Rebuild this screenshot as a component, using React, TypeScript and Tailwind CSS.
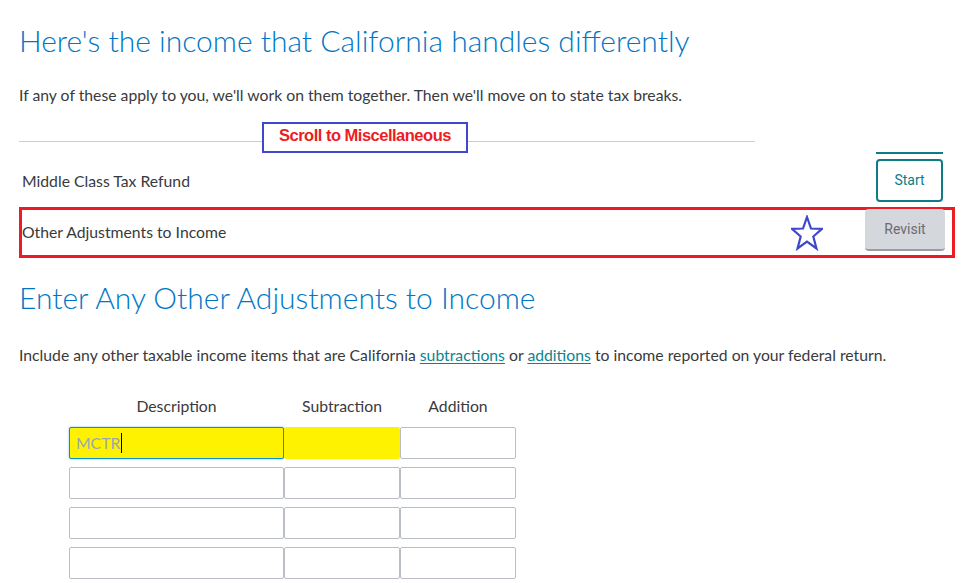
export default function App() {
  const rows = [0, 1, 2, 3]
  return (
    <div className="min-h-screen bg-white text-[#393a3d] font-['Lato','Noto_Sans',sans-serif]">
      <div className="pl-[19px] pt-[22px]">
        <h1 className="text-[30px] leading-[36px] font-light text-[#0077c5]">
          Here's the income that California handles differently
        </h1>
        <p className="mt-[26px] text-[15.75px] leading-[22px]">
          If any of these apply to you, we'll work on them together. Then we'll move on to state tax breaks.
        </p>

        {/* list of income items */}
        <div className="relative mt-[35px] w-[936px]">
          <div className="h-px w-[736px] bg-[#cccccc]" />

          {/* annotation */}
          <div className="absolute left-[243px] top-[-19px] flex h-[31px] w-[206px] items-center border-2 border-[#3f48cc] bg-white pb-[5px] pl-[15px]">
            <span className="font-['Liberation_Sans',sans-serif] text-[16.5px] font-bold tracking-[-0.5px] text-[#ed1c24]">
              Scroll to Miscellaneous
            </span>
          </div>

          <div className="mt-[10px] flex justify-end pr-[12px]">
            <div className="h-[2px] w-[67px] bg-[#0e7c86]" />
          </div>
          <div className="mt-[5px] flex h-[43px] items-center justify-between pl-[3px] pr-[12px]">
            <span className="text-[15.75px]">Middle Class Tax Refund</span>
            <button className="h-[43px] w-[67px] rounded-[4px] border-2 border-[#0e7c86] text-[14px] text-[#0e7c86] font-['Roboto',sans-serif]">
              Start
            </button>
          </div>

          <div className="mt-[5px] flex h-[51px] items-center border-[3px] border-[#ed1c24]">
            <span className="-mt-[2px] text-[15.75px]">Other Adjustments to Income</span>
            <svg className="ml-auto mr-[42px]" width="32" height="36" viewBox="0 0 32 36">
              <polygon
                points="16,2 20,13.5 31,13.8 22.3,21.5 25.5,33.5 16,26.5 6.5,33.5 9.7,21.5 1,13.8 12,13.5"
                fill="none"
                stroke="#3f48cc"
                strokeWidth="2.2"
                strokeLinejoin="miter"
              />
            </svg>
            <button className="mr-[7px] -mt-[1px] h-[42px] w-[80px] self-start rounded-[4px] border-b-2 border-[#9a9ca2] bg-[#d4d7dc] text-[14px] text-[#6b6c72] font-['Roboto',sans-serif]">
              Revisit
            </button>
          </div>
        </div>

        <h2 className="mt-[21px] text-[30px] leading-[36px] font-light text-[#0077c5]">
          Enter Any Other Adjustments to Income
        </h2>
        <p className="mt-[29px] text-[15.75px] leading-[22px]">
          Include any other taxable income items that are California{' '}
          <a className="text-[#0d8390] underline underline-offset-2">subtractions</a> or{' '}
          <a className="text-[#0d8390] underline underline-offset-2">additions</a> to income reported on your federal return.
        </p>

        {/* adjustments table */}
        <div className="ml-[50px] mt-[30px]">
          <div className="flex text-[15.75px] leading-[20px]">
            <div className="w-[215px] text-center">Description</div>
            <div className="w-[116px] text-center">Subtraction</div>
            <div className="w-[116px] text-center">Addition</div>
          </div>
          <div className="mt-[11px] flex flex-col gap-[8px]">
            {rows.map((r) =>
              r === 0 ? (
                <div key={r} className="flex h-[32px]">
                  <div className="flex w-[215px] items-center rounded-[2px] border border-[#0a8fd6] bg-[#fff200] pl-[6px] text-[15.75px] text-[#9aa6b8] shadow-[0_0_2px_#4fb3ee]">
                    MCTR
                    <span className="ml-px h-[20px] w-px bg-black" />
                  </div>
                  <div className="w-[116px] rounded-[2px] bg-[#fff200]" />
                  <div className="w-[116px] rounded-[2px] border border-[#babec5]" />
                </div>
              ) : (
                <div key={r} className="flex h-[32px]">
                  <div className="w-[215px] rounded-[2px] border border-[#babec5]" />
                  <div className="w-[116px] rounded-[2px] border border-[#babec5]" />
                  <div className="w-[116px] rounded-[2px] border border-[#babec5]" />
                </div>
              )
            )}
          </div>
        </div>
      </div>
    </div>
  )
}
